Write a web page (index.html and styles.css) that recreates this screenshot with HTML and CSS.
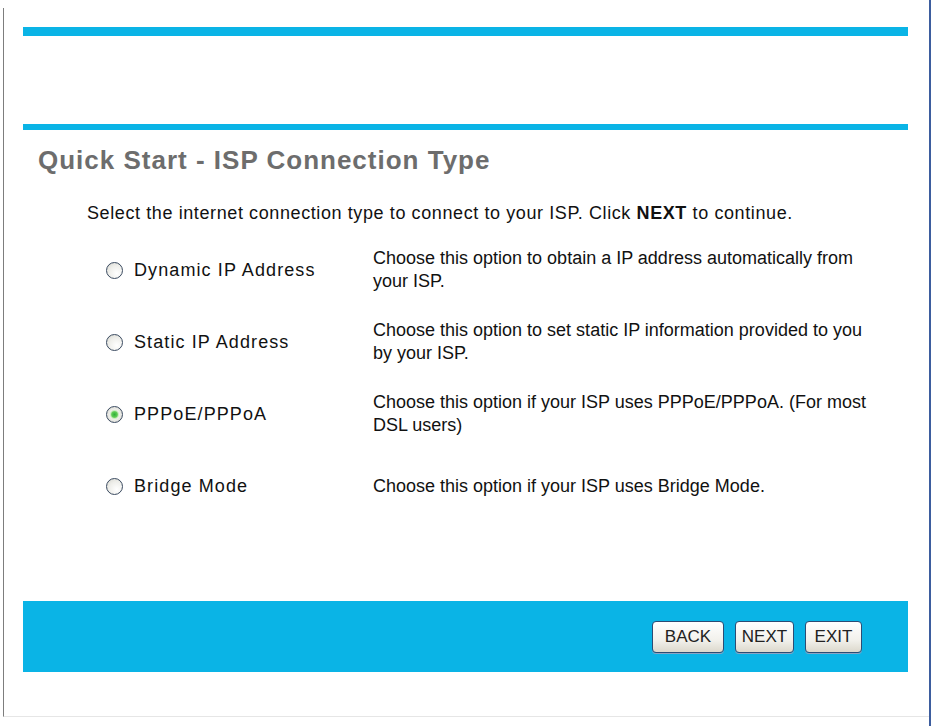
FILE: index.html
```html
<!DOCTYPE html>
<html lang="en">
<head>
    <meta charset="UTF-8">
    <meta name="viewport" content="width=device-width, initial-scale=1.0">
    <title>Quick Start - ISP Connection Type</title>
    <link rel="stylesheet" href="styles.css">
</head>
<body>
    <div class="screen">
        <div class="frame">
            <div class="bar bar-top"></div>
            <div class="bar bar-rule"></div>

            <h1 class="title">Quick Start - ISP Connection Type</h1>
            <p class="intro">Select the internet connection type to connect to your ISP. Click <b>NEXT</b> to continue.</p>

            <form class="options">
                <div class="option">
                    <label class="choice"><input type="radio" name="wan"> Dynamic IP Address</label>
                    <p class="desc">Choose this option to obtain a IP address automatically from your ISP.</p>
                </div>
                <div class="option">
                    <label class="choice"><input type="radio" name="wan"> Static IP Address</label>
                    <p class="desc">Choose this option to set static IP information provided to you by your ISP.</p>
                </div>
                <div class="option">
                    <label class="choice"><input type="radio" name="wan" checked> PPPoE/PPPoA</label>
                    <p class="desc">Choose this option if your ISP uses PPPoE/PPPoA. (For most DSL users)</p>
                </div>
                <div class="option">
                    <label class="choice"><input type="radio" name="wan"> Bridge Mode</label>
                    <p class="desc">Choose this option if your ISP uses Bridge Mode.</p>
                </div>
            </form>

            <div class="bar bar-actions">
                <button type="button" class="btn btn-back">BACK</button>
                <button type="button" class="btn btn-next">NEXT</button>
                <button type="button" class="btn btn-exit">EXIT</button>
            </div>
        </div>
    </div>
</body>
</html>
```

FILE: styles.css
```css
    body {
        margin: 0;
        background: #fff;
        font-family: "Liberation Sans", Arial, sans-serif;
        color: #111;
    }

    .screen {
        width: 931px; height: 726px;
        box-sizing: border-box;
        padding-top: 8px;
        border-right: 2px solid #3d5d9e;
    }

    .frame {
        margin-left: 3px;
        height: 709px;
        box-sizing: border-box;
        border-left: 1px solid #7d7d7d;
        border-bottom: 1px solid #e6e6e6;
        padding: 19px 0 0 19px;
    }

    .bar {
        width: 885px;
        background: #0ab4e6;
    }

    .bar-top { height: 9px; }

    .bar-rule {
        height: 6px;
        margin-top: 88px;
    }

    .title {
        margin: 15px 0 0 15px;
        font-size: 26px; line-height: 30px;
        letter-spacing: 1px;
        color: #6d6d6d;
    }

    .intro {
        margin: 26px 0 0 64px;
        font-size: 18px; line-height: 24px;
        letter-spacing: .6px;
    }

    .options {
        margin: 9px 0 0 85px;
    }

    .option {
        height: 72px;
        display: flex; align-items: center;
    }

    .choice {
        width: 265px;
        display: flex; align-items: center;
        font-size: 18px;
        letter-spacing: 1.1px;
    }

    .choice input {
        appearance: none;
        flex: none;
        width: 17px; height: 17px;
        margin: 0 11px 0 -2px;
        border: 1px solid #3a4a60;
        border-radius: 50%;
        background: radial-gradient(circle at 65% 70%, #fff 0, #eeeeea 55%, #d4d4cc 100%);
        box-sizing: border-box;
    }

    .choice input:checked {
        background: radial-gradient(circle, #2fb03a 0, #5fcc55 2.8px, #c8eec0 4px, #eeeeea 5px, #d4d4cc 100%);
    }

    .desc {
        width: 500px;
        margin: 0;
        font-size: 18px; line-height: 23px;
    }

    .bar-actions {
        height: 71px;
        margin-top: 79px;
        display: flex; align-items: center; justify-content: flex-end;
        gap: 11px;
        padding-right: 46px;
        box-sizing: border-box;
    }

    .btn {
        height: 32px;
        padding: 0;
        border: 1px solid #2c4c74;
        border-radius: 4px;
        background: linear-gradient(#ffffff, #f2f1ec 60%, #dcd8cc);
        box-shadow: 0 1px 0 #8aa4c4;
        font-family: "Liberation Sans", Arial, sans-serif;
        font-size: 17px;
        color: #222;
        cursor: pointer;
    }

    .btn-back { width: 72px; }
    .btn-next { width: 59px; }
    .btn-exit { width: 57px; }
```
